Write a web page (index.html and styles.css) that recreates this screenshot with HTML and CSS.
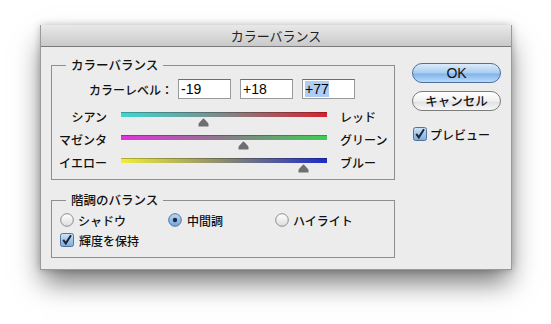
FILE: index.html
```html
<!DOCTYPE html>
<html lang="ja">
<head>
<meta charset="UTF-8">
<title>カラーバランス</title>
<link rel="stylesheet" href="styles.css">
</head>
<body>

<div class="window">
  <div class="titlebar">カラーバランス</div>

  <div class="content">
    <div class="left">

      <fieldset class="group group-color">
        <legend>カラーバランス</legend>

        <div class="level-row">
          <span class="level-label">カラーレベル：</span>
          <span class="field">-19</span>
          <span class="field">+18</span>
          <span class="field"><span class="sel">+77</span></span>
        </div>

        <div class="slider-row">
          <span class="side-l">シアン</span>
          <div class="track cyan-red">
            <svg class="thumb" style="left:40%" width="11" height="9" viewBox="0 0 11 9"><path d="M5.5 0.5 Q6 0.5 7 1.8 L10 5 Q10.5 5.6 10.5 6.5 V8.5 H0.5 V6.5 Q0.5 5.6 1 5 L4 1.8 Q5 0.5 5.5 0.5 Z" fill="#6f6f6f"/></svg>
          </div>
          <span class="side-r">レッド</span>
        </div>

        <div class="slider-row">
          <span class="side-l">マゼンタ</span>
          <div class="track magenta-green">
            <svg class="thumb" style="left:59%" width="11" height="9" viewBox="0 0 11 9"><path d="M5.5 0.5 Q6 0.5 7 1.8 L10 5 Q10.5 5.6 10.5 6.5 V8.5 H0.5 V6.5 Q0.5 5.6 1 5 L4 1.8 Q5 0.5 5.5 0.5 Z" fill="#6f6f6f"/></svg>
          </div>
          <span class="side-r">グリーン</span>
        </div>

        <div class="slider-row">
          <span class="side-l">イエロー</span>
          <div class="track yellow-blue">
            <svg class="thumb" style="left:88.5%" width="11" height="9" viewBox="0 0 11 9"><path d="M5.5 0.5 Q6 0.5 7 1.8 L10 5 Q10.5 5.6 10.5 6.5 V8.5 H0.5 V6.5 Q0.5 5.6 1 5 L4 1.8 Q5 0.5 5.5 0.5 Z" fill="#6f6f6f"/></svg>
          </div>
          <span class="side-r">ブルー</span>
        </div>
      </fieldset>

      <fieldset class="group group-tone">
        <legend>階調のバランス</legend>

        <div class="radio-row">
          <label class="radio-item">
            <svg class="radio" width="14" height="14" viewBox="0 0 14 14">
              <defs>
                <linearGradient id="rOff" x1="0" y1="0" x2="0" y2="1"><stop offset="0" stop-color="#ffffff"/><stop offset="1" stop-color="#dcdcdc"/></linearGradient>
              </defs>
              <circle cx="7" cy="7" r="6.3" fill="url(#rOff)" stroke="#8d8d8d" stroke-width="1"/>
            </svg>
            シャドウ
          </label>
          <label class="radio-item">
            <svg class="radio" width="14" height="14" viewBox="0 0 14 14">
              <defs>
                <linearGradient id="rOn" x1="0" y1="0" x2="0" y2="1"><stop offset="0" stop-color="#bcd9f5"/><stop offset="1" stop-color="#6ea5dc"/></linearGradient>
              </defs>
              <circle cx="7" cy="7" r="6.3" fill="url(#rOn)" stroke="#55729a" stroke-width="1"/>
              <circle cx="7" cy="7" r="2.2" fill="#1f2b3a"/>
            </svg>
            中間調
          </label>
          <label class="radio-item">
            <svg class="radio" width="14" height="14" viewBox="0 0 14 14">
              <circle cx="7" cy="7" r="6.3" fill="url(#rOff)" stroke="#8d8d8d" stroke-width="1"/>
            </svg>
            ハイライト
          </label>
        </div>

        <label class="check-row">
          <svg class="check" width="14" height="14" viewBox="0 0 14 14">
            <defs>
              <linearGradient id="cOn" x1="0" y1="0" x2="0" y2="1"><stop offset="0" stop-color="#cfe3f7"/><stop offset="1" stop-color="#79acdf"/></linearGradient>
            </defs>
            <rect x="0.5" y="0.5" width="13" height="13" rx="2" fill="url(#cOn)" stroke="#55729a"/>
            <path d="M3.2 6.8 L5.8 10.4 L11 2.2" fill="none" stroke="#1c2836" stroke-width="2"/>
          </svg>
          輝度を保持
        </label>
      </fieldset>

    </div>

    <div class="right">
      <button class="btn btn-ok">OK</button>
      <button class="btn btn-cancel">キャンセル</button>
      <label class="check-row preview">
        <svg class="check" width="14" height="14" viewBox="0 0 14 14">
          <rect x="0.5" y="0.5" width="13" height="13" rx="2" fill="url(#cOn)" stroke="#55729a"/>
          <path d="M3.2 6.8 L5.8 10.4 L11 2.2" fill="none" stroke="#1c2836" stroke-width="2"/>
        </svg>
        プレビュー
      </label>
    </div>
  </div>
</div>

</body>
</html>
```

FILE: styles.css
```css
html { background: #ffffff; }
body {
  margin: 0;
  min-height: 324px;
  box-sizing: border-box;
  padding: 25px 0 0 40px;
  background: #ffffff;
  font-family: "Noto Sans CJK JP", "Noto Sans", sans-serif;
  font-size: 12px;
  font-weight: 500;
  color: #111;
}

/* Window */
.window {
  width: 472px;
  height: 245px;
  box-sizing: border-box;
  background: #ececec;
  border: 1px solid #9a9a9a;
  border-top: none;
  box-shadow: 0 15px 26px -3px rgba(0,0,0,0.55), 0 0 7px rgba(0,0,0,0.22);
}
.titlebar {
  height: 21px;
  line-height: 21px;
  text-align: center;
  font-size: 13px;
  font-weight: 400;
  color: #222;
  background: linear-gradient(#e9e9e9, #c9c9c9);
  border-bottom: 1px solid #7a7a7a;
}
.content { display: flex; padding-left: 10px; }
.left { width: 344px; }
.right {
  width: 89px;
  margin-left: 17px;
  padding-top: 16px;
  display: flex;
  flex-direction: column;
}

/* Group boxes */
.group {
  margin: 0;
  padding: 0 0 10px 0;
  border: 1px solid #8e8e8e;
  min-width: 0;
}
.group legend {
  margin-left: 14px;
  padding: 0 5px;
  line-height: 14px;
  font-size: 12.5px;
}
.group-color { margin-top: 11px; }
.group-tone { margin-top: 13px; padding-bottom: 10px; }

/* Level inputs */
.level-row { display: flex; align-items: center; margin-top: 7px; }
.level-label { width: 121px; text-align: right; margin-right: 5px; }
.field {
  width: 53px;
  height: 20px;
  box-sizing: border-box;
  margin-right: 9px;
  padding-left: 2px;
  background: #fff;
  border: 1px solid #9a9a9a;
  border-top-color: #6e6e6e;
  font-family: "Liberation Sans", sans-serif;
  font-size: 14px;
  font-weight: 400;
  line-height: 18px;
  color: #000;
}
.sel { background: #aecdf5; }

/* Sliders */
.slider-row { display: flex; align-items: center; height: 14px; margin-top: 9px; }
.level-row + .slider-row { margin-top: 10px; }
.side-l { width: 55px; text-align: right; }
.side-r { margin-left: 13px; }
.track {
  position: relative;
  width: 206px;
  height: 5px;
  margin-left: 14px;
  margin-top: -3px;
  box-shadow: inset 0 1px 0 rgba(0,0,0,0.25);
}
.cyan-red { background: linear-gradient(to right, #3fd6d0, #7f8888 50%, #d8202e); }
.magenta-green { background: linear-gradient(to right, #e62ee0, #8a7a8a 50%, #3ccf52); }
.yellow-blue { background: linear-gradient(to right, #f0ee3a, #8a8a70 50%, #1c2cc8); }
.thumb { position: absolute; top: 6px; margin-left: -5px; }

/* Radios and checkboxes */
.radio-row { display: flex; align-items: center; height: 14px; margin-top: 6px; padding-left: 8px; }
.radio-item { display: flex; align-items: center; }
.radio-item:nth-child(1) { width: 108px; }
.radio-item:nth-child(2) { width: 107px; }
.radio { margin-right: 4px; }
.radio-item:nth-child(2) .radio { margin-right: 5px; }
.check-row { display: flex; align-items: center; margin-top: 6px; padding-left: 8px; height: 14px; }
.check { margin-right: 5px; }
.preview { padding-left: 1px; margin-top: 16px; }
.preview .check { margin-right: 3px; }

/* Buttons */
.btn {
  height: 20px;
  padding: 0;
  border-radius: 10px;
  font-family: "Noto Sans CJK JP", "Noto Sans", sans-serif;
  font-size: 12.5px;
  font-weight: 500;
  line-height: 18px;
  color: #111;
}
.btn-ok {
  border: 1px solid #4f6f9c;
  background: linear-gradient(#dcebfa, #a9cdf1 50%, #7fb4ea 55%, #b8dafa);
  font-family: "Liberation Sans", sans-serif;
  font-size: 14px;
  font-weight: 400;
}
.btn-cancel {
  margin-top: 8px;
  border: 1px solid #7c7c7c;
  background: linear-gradient(#ffffff, #f1f1f1 50%, #e2e2e2 55%, #f7f7f7);
}
```
